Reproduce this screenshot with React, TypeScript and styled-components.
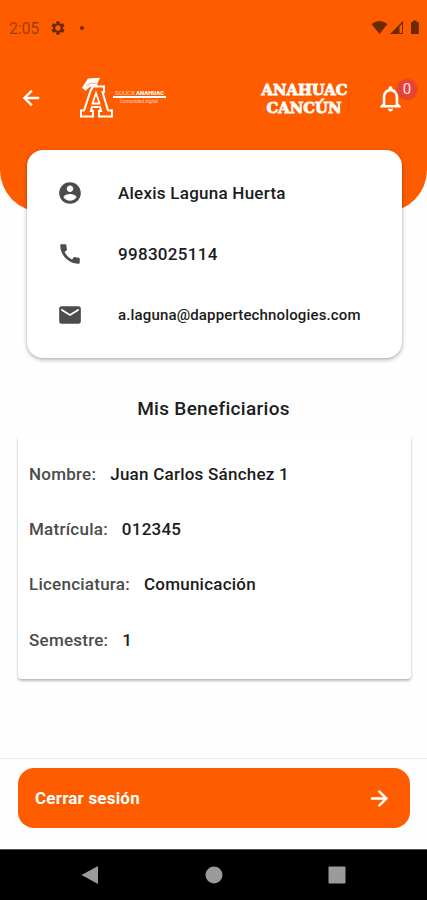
import React from "react";
import styled, { createGlobalStyle } from "styled-components";

const ORANGE = "#ff5c00";

const GlobalStyle = createGlobalStyle`
  *, *::before, *::after { box-sizing: border-box; }
  body { margin: 0; background: #fefefe; font-family: Roboto, "Liberation Sans", sans-serif; }
`;

const Screen = styled.div`
  width: 427px;
  height: 900px;
  display: flex;
  flex-direction: column;
  overflow: hidden;
  background: #fefefe;
`;

const Header = styled.header`
  flex: none;
  height: 212px;
  background: ${ORANGE};
  border-radius: 0 0 42px 42px;
`;

const StatusBar = styled.div`
  height: 54px;
  padding: 1px 6px 0 9px;
  display: flex;
  align-items: center;
  color: #6c2903;
`;

const Clock = styled.span`
  width: 41px;
  padding-top: 1px;
  font-size: 16px;
  letter-spacing: -0.2px;
  color: #a53c02;
`;

const Dot = styled.span`
  width: 4px;
  height: 4px;
  margin-left: 14px;
  border-radius: 50%;
  background: currentColor;
`;

const StatusIcons = styled.div`
  margin-left: auto;
  display: flex;
  align-items: center;
`;

const AppBar = styled.div`
  height: 88px;
  padding: 0 8px 0 19px;
  display: flex;
  align-items: center;
  color: #fff;
`;

const Logo = styled.svg`
  margin-left: 36px;
`;

const Campus = styled.svg`
  margin-left: auto;
  overflow: visible;
`;

const Bell = styled.div`
  position: relative;
  width: 31px;
  height: 31px;
  margin: 0 13px 0 26px;
`;

const Badge = styled.span`
  position: absolute;
  left: 22px;
  top: -4px;
  width: 20px;
  height: 20px;
  border-radius: 50%;
  background: #e8403a;
  box-shadow: 0 1px 2px rgba(120, 30, 0, 0.3);
  color: #ffe9e4;
  font-size: 15px;
  line-height: 20px;
  text-align: center;
`;

const ProfileCard = styled.section`
  flex: none;
  width: 375px;
  height: 208px;
  margin: -62px 0 0 27px;
  padding: 12px 0 13px 30px;
  border-radius: 16px;
  background: #fff;
  box-shadow: 0 2px 4px rgba(0, 0, 0, 0.28), 0 0 2px rgba(0, 0, 0, 0.1);
`;

const ProfileRow = styled.div`
  height: 61px;
  display: flex;
  align-items: center;
  gap: 35px;
  color: #4c4c4c;
`;

const ProfileText = styled.span<{ $size: number; $spacing: number }>`
  font-size: ${(p) => p.$size}px;
  letter-spacing: ${(p) => p.$spacing}px;
  font-weight: 500;
  color: #1b1b1b;
  white-space: nowrap;
`;

const Title = styled.h1`
  flex: none;
  height: 76px;
  margin: 0;
  padding-top: 24px;
  font-size: 19px;
  line-height: 53px;
  font-weight: 500;
  letter-spacing: 0.3px;
  text-align: center;
  color: #1c1c1c;
`;

const DetailCard = styled.section`
  flex: none;
  width: 393px;
  height: 244px;
  margin: 1px 0 0 18px;
  padding: 11px;
  border-radius: 4px;
  background: #fff;
  box-shadow: 0 2px 3px rgba(0, 0, 0, 0.25), 0 1px 2px rgba(0, 0, 0, 0.06);
`;

const DetailRow = styled.div`
  height: 55.4px;
  display: flex;
  align-items: center;
  gap: 14px;
  font-size: 17px;
  font-weight: 500;
  letter-spacing: 0.24px;
`;

const Label = styled.span`
  color: #4b4b4b;
`;

const Value = styled.span`
  color: #1b1b1b;
`;

const Footer = styled.footer`
  flex: none;
  height: 91px;
  margin-top: auto;
  padding: 9px 17px 0 18px;
  border-top: 1px solid #e9e9e9;
`;

const LogoutButton = styled.button`
  width: 392px;
  height: 60px;
  padding: 0 18px 0 17px;
  border: 0;
  border-radius: 16px;
  display: flex;
  align-items: center;
  justify-content: space-between;
  background: ${ORANGE};
  color: #fff;
  font: 700 17px Roboto, sans-serif;
  letter-spacing: 0.2px;
`;

const NavBar = styled.nav`
  flex: none;
  height: 51px;
  padding: 0 81px;
  border-top: 1px solid #555;
  display: flex;
  align-items: center;
  justify-content: space-between;
  background: #000;
  color: #9b9b9b;
`;

type IconProps = { d: string; size?: number; weight?: number };

const Icon = ({ d, size = 24, weight = 0 }: IconProps) => (
  <svg
    width={size}
    height={size}
    viewBox="0 0 24 24"
    fill="currentColor"
    stroke="currentColor"
    strokeWidth={weight}
    aria-hidden="true"
  >
    <path d={d} fillRule="evenodd" />
  </svg>
);

const paths = {
  gear: "M19.43 12.98c.04-.32.07-.64.07-.98s-.03-.66-.07-.98l2.11-1.65c.19-.15.24-.42.12-.64l-2-3.46c-.12-.22-.39-.3-.61-.22l-2.49 1c-.52-.4-1.08-.73-1.69-.98l-.38-2.65C14.46 2.18 14.25 2 14 2h-4c-.25 0-.46.18-.49.42l-.38 2.65c-.61.25-1.17.59-1.69.98l-2.49-1c-.23-.09-.49 0-.61.22l-2 3.46c-.13.22-.07.49.12.64l2.11 1.65c-.04.32-.07.65-.07.98s.03.66.07.98l-2.11 1.65c-.19.15-.24.42-.12.64l2 3.46c.12.22.39.3.61.22l2.49-1c.52.4 1.08.73 1.69.98l.38 2.65c.03.24.24.42.49.42h4c.25 0 .46-.18.49-.42l.38-2.65c.61-.25 1.17-.59 1.69-.98l2.49 1c.23.09.49 0 .61-.22l2-3.46c.12-.22.07-.49-.12-.64l-2.11-1.65zM12 16a4 4 0 1 1 0-8 4 4 0 0 1 0 8z",
  back: "M20 11H7.83l5.59-5.59L12 4l-8 8 8 8 1.41-1.41L7.83 13H20v-2z",
  forward: "M12 4l-1.41 1.41L16.17 11H4v2h12.17l-5.58 5.59L12 20l8-8z",
  bell: "M12 22c1.1 0 2-.9 2-2h-4c0 1.1.9 2 2 2zm6-6v-5c0-3.07-1.63-5.64-4.5-6.32V4c0-.83-.67-1.5-1.5-1.5s-1.5.67-1.5 1.5v.68C7.64 5.36 6 7.92 6 11v5l-2 2v1h16v-1l-2-2zm-2 1H8v-6c0-2.48 1.51-4.5 4-4.5s4 2.02 4 4.5v6z",
  account:
    "M12 2C6.48 2 2 6.48 2 12s4.48 10 10 10 10-4.48 10-10S17.52 2 12 2zm0 3c1.66 0 3 1.34 3 3s-1.34 3-3 3-3-1.34-3-3 1.34-3 3-3zm0 14.2c-2.5 0-4.71-1.28-6-3.22.03-1.99 4-3.08 6-3.08 1.99 0 5.97 1.09 6 3.08-1.29 1.94-3.5 3.22-6 3.22z",
  phone:
    "M20.01 15.38c-1.23 0-2.42-.2-3.53-.56-.35-.12-.74-.03-1.01.24l-1.57 1.97c-2.83-1.35-5.48-3.9-6.89-6.83l1.95-1.66c.27-.28.35-.67.24-1.02-.37-1.11-.56-2.3-.56-3.53 0-.54-.45-.99-.99-.99H4.19C3.65 3 3 3.24 3 3.99 3 13.28 10.73 21 20.01 21c.71 0 .99-.63.99-1.18v-3.45c0-.54-.45-.99-.99-.99z",
  mail: "M20 4H4c-1.1 0-1.99.9-1.99 2L2 18c0 1.1.9 2 2 2h16c1.1 0 2-.9 2-2V6c0-1.1-.9-2-2-2zm0 4l-8 5-8-5V6l8 5 8-5v2z",
};

const contact = [
  { icon: paths.account, size: 26, text: "Alexis Laguna Huerta", font: 17, spacing: 0.25 },
  { icon: paths.phone, size: 26, text: "9983025114", font: 17, spacing: 0.3 },
  { icon: paths.mail, size: 26, text: "a.laguna@dappertechnologies.com", font: 15, spacing: 0.15 },
];

const details = [
  ["Nombre:", "Juan Carlos Sánchez 1"],
  ["Matrícula:", "012345"],
  ["Licenciatura:", "Comunicación"],
  ["Semestre:", "1"],
];

export default function App() {
  return (
    <>
      <GlobalStyle />
      <Screen>
        <Header>
          <StatusBar>
            <Clock>2:05</Clock>
            <Icon d={paths.gear} size={16} />
            <Dot />
            <StatusIcons>
              <svg width="50" height="16" viewBox="0 0 50 16" fill="currentColor">
                <path d="M0.500 4Q8.500-2 16.500 4L8.500 14Z" />
                <path d="M19 14L32 1V14Z" />
                <path d="M28.500 6.500L31 4V13H28.500Z" fill={ORANGE} />
                <path d="M40 2H42V0.500H45.500V2H47.800V14H40Z" />
              </svg>
            </StatusIcons>
          </StatusBar>
          <AppBar>
            <Icon d={paths.back} weight={0.5} />
            <Logo width="88" height="42" viewBox="0 0 88 42">
              <path
                d="M14 9.500H25V15H23.500L29 33.500H33V39.500H20V34H22L21 30H13L12 34H14V39.500H2V33.500H5L11.500 14Z"
                fill="none"
                stroke="#fff"
                strokeWidth="2"
              />
              <path d="M17 16L20.500 26.500H13.500Z" fill="none" stroke="#fff" strokeWidth="1.800" />
              <path d="M9 1.500L21 0.800L18.500 6.500L18 9.500Q11 8 6.500 14L3 10.500L4.500 8.500Z" fill="#fff" />
              <path d="M7 8.500Q12 4.500 18 6.500" fill="none" stroke={ORANGE} strokeWidth="0.500" />
              <text x="36" y="18" fontFamily="Roboto" fontSize="6" textLength="20" lengthAdjust="spacingAndGlyphs" fill="#ffd9c7">SOUCX</text>
              <text x="57" y="18" fontFamily="Roboto" fontWeight="900" fontSize="6" textLength="28" lengthAdjust="spacingAndGlyphs" fill="#fff">ANAHUAC</text>
              <rect x="34" y="19" width="53" height="2" fill="#fff" />
              <text x="41" y="25.500" fontFamily="Roboto" fontSize="4.500" textLength="38" lengthAdjust="spacingAndGlyphs" fill="#ffd2bc">Comunidad digital</text>
            </Logo>
            <Campus width="90" height="38" viewBox="0 0 90 38" fill="#fff" stroke="#fff" strokeWidth="0.800">
              <text x="2.500" y="16" fontFamily="DejaVu Serif" fontWeight="700" fontSize="15.500" textLength="86" lengthAdjust="spacingAndGlyphs">ANAHUAC</text>
              <text x="7.500" y="33.500" fontFamily="DejaVu Serif" fontWeight="700" fontSize="15.500" textLength="75" lengthAdjust="spacingAndGlyphs">CANCÚN</text>
            </Campus>
            <Bell>
              <Icon d={paths.bell} size={31} />
              <Badge>0</Badge>
            </Bell>
          </AppBar>
        </Header>

        <ProfileCard>
          {contact.map((c) => (
            <ProfileRow key={c.text}>
              <Icon d={c.icon} size={c.size} />
              <ProfileText $size={c.font} $spacing={c.spacing}>{c.text}</ProfileText>
            </ProfileRow>
          ))}
        </ProfileCard>

        <Title>Mis Beneficiarios</Title>

        <DetailCard>
          {details.map(([label, value]) => (
            <DetailRow key={label}>
              <Label>{label}</Label>
              <Value>{value}</Value>
            </DetailRow>
          ))}
        </DetailCard>

        <Footer>
          <LogoutButton>
            Cerrar sesión
            <Icon d={paths.forward} size={25} weight={0.5} />
          </LogoutButton>
        </Footer>

        <NavBar>
          <svg width="18" height="20" viewBox="0 0 18 20" fill="currentColor">
            <path d="M0.500 10L17 1V19Z" />
          </svg>
          <svg width="18" height="18" viewBox="0 0 18 18" fill="currentColor">
            <circle cx="9" cy="9" r="8.500" />
          </svg>
          <svg width="18" height="18" viewBox="0 0 18 18" fill="currentColor">
            <rect x="0.500" y="0.500" width="17" height="17" rx="1" />
          </svg>
        </NavBar>
      </Screen>
    </>
  );
}
